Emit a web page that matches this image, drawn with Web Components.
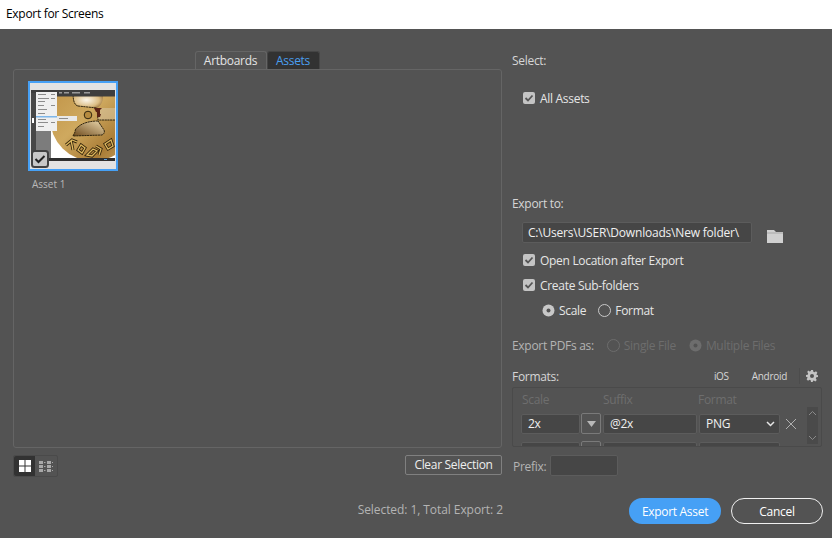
<!DOCTYPE html>
<html>
<head>
<meta charset="utf-8">
<title>Export for Screens</title>
<style>
  html, body { margin: 0; height: 100%; overflow: hidden; }
  body { background: #535353; font: 12px "Open Sans", sans-serif; letter-spacing: -0.3px; color: #d6d6d6; }
  .main { display: flex; padding: 22px 10px 0 13px; gap: 10px; }
  .left { width: 489px; display: flex; flex-direction: column; }
  .right { width: 310px; display: flex; flex-direction: column; }
  .footer { display: flex; align-items: center; padding: 21px 9px 0 0; }
  .status { width: 503px; text-align: right; color: #b4b4b4; letter-spacing: -0.07px; margin-bottom: 3px; }
  .actions { display: flex; gap: 10px; margin-left: auto; }
  .row { display: flex; align-items: center; height: 20px; }
  .toolbar { display: flex; justify-content: space-between; align-items: flex-start; margin-top: 7px; }
  .sect { height: 16px; line-height: 16px; }
  .dim { color: #7a7a7a; }
</style>
</head>
<body>
<export-titlebar>Export for Screens</export-titlebar>
<div class="main">
  <div class="left">
    <export-tabs></export-tabs>
    <asset-panel><asset-thumb>Asset 1</asset-thumb></asset-panel>
    <div class="toolbar">
      <view-toggle></view-toggle>
      <export-button kind="small">Clear Selection</export-button>
    </div>
  </div>
  <div class="right">
    <div class="sect" style="margin-top:2px">Select:</div>
    <div class="row" style="margin:19px 0 0 11px"><export-check checked>All Assets</export-check></div>
    <div class="sect" style="margin-top:88px">Export to:</div>
    <div class="row" style="margin:10px 0 0 10px;height:21px">
      <text-field style="width:230px;letter-spacing:-0.2px">C:\Users\USER\Downloads\New folder\</text-field>
      <svg width="16" height="14" viewBox="0 0 16 14" style="margin:6px 0 0 15px">
        <path d="M0 1h7l2 2h7v11H0z" fill="#d0d0d0"/><path d="M0 4h16" stroke="#8f8f8f" stroke-width=".6"/>
      </svg>
    </div>
    <div class="row" style="margin:7px 0 0 11px"><export-check checked>Open Location after Export</export-check></div>
    <div class="row" style="margin:5px 0 0 11px"><export-check checked>Create Sub-folders</export-check></div>
    <div class="row" style="margin:5px 0 0 30px;gap:12px">
      <export-radio checked>Scale</export-radio><export-radio>Format</export-radio>
    </div>
    <div class="row dim" style="margin-top:15px;height:20px">
      <span style="color:#b4b4b4;margin-right:13px">Export PDFs as:</span>
      <export-radio disabled>Single File</export-radio>
      <export-radio disabled checked style="margin-left:13px">Multiple Files</export-radio>
    </div>
    <div class="row" style="margin-top:11px;height:20px">
      <span>Formats:</span>
      <span style="margin-left:auto;font-size:10px">iOS</span>
      <span style="margin-left:23px;font-size:10px">Android</span>
      <span style="width:1px;height:16px;background:#4c4c4c;margin:0 6px 0 12px"></span>
      <svg width="12" height="12" viewBox="0 0 24 24" style="margin-right:4px">
        <path fill="#c4c4c4" fill-rule="evenodd" d="M10 0h4l.7 3.4 2.3 1 3-1.9 2.8 2.8-1.900 3 1 2.300L24 10v4l-3.400.7-1 2.300 1.900 3-2.800 2.800-3-1.900-2.300 1L14 24h-4l-.7-3.400-2.300-1-3 1.900-2.800-2.800 1.900-3-1-2.300L0 14v-4l3.400-.7 1-2.300-1.900-3L4.300 1.200l3 1.900 2.300-1zM12 8a4 4 0 100 8 4 4 0 000-8z"/>
      </svg>
    </div>
    <format-table></format-table>
    <div class="row" style="margin-top:7px;height:22px;gap:4px;color:#b4b4b4">
      <span style="margin-left:1px;padding-top:2px">Prefix:</span><text-field style="width:68px"></text-field>
    </div>
  </div>
</div>
<div class="footer">
  <div class="status">Selected: 1, Total Export: 2</div>
  <div class="actions">
    <export-button kind="primary">Export Asset</export-button>
    <export-button kind="outline">Cancel</export-button>
  </div>
</div>

<script>
  /**
   * Small helper, every element below has a shadow root filled from a string.
   */
  class ShadowEl extends HTMLElement {
    constructor () {
      super()
      this.attachShadow({ mode: 'open' })
    }

    connectedCallback () {
      this.shadowRoot.innerHTML = this.markup()
    }
  }

  customElements.define('export-titlebar', class extends ShadowEl {
    markup () {
      return `<style>
        :host { display: flex; align-items: center; height: 29px; padding-left: 6px; background: #fff; color: #000; padding-bottom: 2px; box-sizing: border-box; }
      </style><slot></slot>`
    }
  })

  customElements.define('export-tabs', class extends ShadowEl {
    markup () {
      return `<style>
        :host { display: flex; justify-content: center; height: 18px; padding-right: 1px; }
        div { height: 18px; box-sizing: border-box; border: 1px solid #656565; border-bottom: 0; border-radius: 3px 3px 0 0; line-height: 17px; text-align: center; }
        .a { width: 72px; color: #e4e4e4; background: #535353; }
        .b { width: 53px; color: #4a9ff0; background: #323232; border-color: #454545; }
      </style><div class="a">Artboards</div><div class="b">Assets</div>`
    }
  })

  customElements.define('asset-panel', class extends ShadowEl {
    markup () {
      return `<style>
        :host { display: block; height: 379px; box-sizing: border-box; border: 1px solid #656565; border-radius: 3px; padding: 11px 14px; }
      </style><slot></slot>`
    }
  })

  customElements.define('asset-thumb', class extends ShadowEl {
    markup () {
      return `<style>
        :host { display: block; width: 90px; color: #b8b8b8; font-size: 10px; letter-spacing: 0; }
        svg { display: block; }
        div { margin: 6px 0 0 4px; line-height: 14px; }
      </style>
      <svg width="90" height="90" viewBox="28 81 90 90">
        <defs>
          <linearGradient id="gold" x1="0" y1="0" x2="1" y2="1">
            <stop offset="0" stop-color="#bd8f42"/><stop offset=".45" stop-color="#cfa95f"/>
            <stop offset=".75" stop-color="#a97c36"/><stop offset="1" stop-color="#cba868"/>
          </linearGradient>
          <radialGradient id="blob" cx=".45" cy=".5" r=".7">
            <stop offset="0" stop-color="#fbf6ea"/><stop offset=".6" stop-color="#dcbd84"/><stop offset="1" stop-color="#7a5220"/>
          </radialGradient>
          <linearGradient id="low" x1="0" y1="1" x2="1" y2="0">
            <stop offset="0" stop-color="#6e4a1c"/><stop offset="1" stop-color="#ecd9ae"/>
          </linearGradient>
          <clipPath id="img"><rect x="31" y="90" width="84" height="71"/></clipPath>
        </defs>
        <rect x="28" y="81" width="90" height="90" fill="#46a0f5"/>
        <rect x="30" y="83" width="86" height="86" fill="#e2e2e2"/>
        <g clip-path="url(#img)">
          <rect x="31" y="90" width="84" height="71" fill="#fff"/>
          <circle cx="93" cy="118" r="43" fill="url(#gold)"/>
          <path d="M73 92h29c2 6 1 12-5 16l-19-2c-3-1-5-6-5-14z" fill="url(#blob)"/>
          <path d="M78 106l19 2 1 12h18v-12H97z" fill="#d8c8a6" opacity=".55"/>
          <path d="M78 106l19 2 1 12h18M73 92c0 8 1 13 5 14" fill="none" stroke="#201808" stroke-width=".9" stroke-dasharray="2.200 .5"/>
          <path d="M98 121c-8 0-16 2-20 6-2 1-3 3-3 5l-2 4 29-1c2-1 3-3 2-5z" fill="url(#low)" stroke="#201808" stroke-width=".9" stroke-dasharray="2.200 .5"/>
          <circle cx="88" cy="115" r="3.800" fill="#b68b3f" stroke="#201808" stroke-width=".9"/>
          <path d="M94 108h8l-2 2v4h1l-1 3h-3v-5h-1z" fill="#5a2216"/>
          <g fill="none" stroke="#33240c" stroke-width="3"><path d="M66 145l6-5 5 2m-6-2l2 10"/><path d="M78 150l3-5 4 3-3 5z"/><path d="M87 155l6-6 4 2-5 5zM96 146l5 3-2 6"/><path d="M105 144l6-4 2 6-5 3z"/></g>
          <g fill="none" stroke="#dfb95f" stroke-width="1.300"><path d="M66 145l6-5 5 2m-6-2l2 10"/><path d="M78 150l3-5 4 3-3 5z"/><path d="M87 155l6-6 4 2-5 5zM96 146l5 3-2 6"/><path d="M105 144l6-4 2 6-5 3z"/></g>
          <rect x="31" y="90" width="84" height="6.500" fill="#3e3e3e"/>
          <g fill="#9a9a9a"><rect x="59" y="92" width="3" height="1.500"/><rect x="64" y="92" width="5" height="1.500"/><rect x="72" y="92" width="8" height="1.500"/><rect x="84" y="92" width="6" height="1.500"/></g>
          <rect x="31" y="93" width="5" height="65" fill="#474747"/>
          <rect x="36" y="93" width="15" height="65" fill="#7c7c7c"/>
          <path d="M51 125q-1 20 9 33H51z" fill="#fff"/>
          <rect x="32" y="118" width="2" height="5" fill="#fff"/>
          <rect x="36" y="92" width="21" height="39" fill="#efefef"/>
          <g fill="#8c8c8c"><rect x="38" y="94" width="8" height="1"/><rect x="51" y="94" width="4" height="1"/><rect x="38" y="98" width="11" height="1"/><rect x="51" y="98" width="4" height="1"/><rect x="38" y="101" width="7" height="1"/><rect x="38" y="105" width="6" height="1"/><rect x="51" y="105" width="4" height="1"/><rect x="38" y="109" width="9" height="1"/><rect x="38" y="113" width="7" height="1"/><rect x="38" y="119" width="8" height="1"/><rect x="38" y="122" width="10" height="1"/><rect x="51" y="122" width="4" height="1"/><rect x="38" y="126" width="6" height="1"/></g>
          <rect x="36" y="116" width="21" height="1.500" fill="#7db6ea"/>
          <rect x="57" y="116" width="20" height="5" fill="#e8e8e8"/>
          <rect x="59" y="118" width="9" height="1" fill="#8c8c8c"/>
          <rect x="31" y="158" width="84" height="3" fill="#2e2e2e"/>
          <rect x="104" y="159" width="3" height="1" fill="#5a9ad8"/>
        </g>
        <rect x="32" y="151" width="16" height="16" rx="2.500" fill="#c8c8c8" stroke="#424242" stroke-width="2"/>
        <path d="M35.500 159l3 3 6-6" fill="none" stroke="#222" stroke-width="2"/>
      </svg>
      <div><slot></slot></div>`
    }
  })

  customElements.define('view-toggle', class extends ShadowEl {
    markup () {
      return `<style>
        :host { display: flex; width: 45px; height: 22px; box-sizing: border-box; border: 1px solid #4a4a4a; border-radius: 2px; }
        div { display: flex; align-items: center; justify-content: center; }
        .on { width: 21px; background: #323232; border-radius: 2px 0 0 2px; }
        .off { flex: 1; }
        svg { display: block; }
      </style>
      <div class="on"><svg width="12" height="12"><path fill="#fff" d="M0 0h5.500v5.500H0zM6.500 0H12v5.500H6.500zM0 6.500h5.500V12H0zM6.500 6.500H12V12H6.500z"/></svg></div>
      <div class="off"><svg width="14" height="11"><path fill="#a8a8a8" d="M0 0h4v3H0zM8 0h4v3H8zM5 1h1.500v1H5zM13 1h1v1h-1zM0 4h4v3H0zM8 4h4v3H8zM5 5h1.500v1H5zM13 5h1v1h-1zM0 8h4v3H0zM8 8h4v3H8zM5 9h1.500v1H5zM13 9h1v1h-1z"/></svg></div>`
    }
  })

  customElements.define('export-button', class extends ShadowEl {
    markup () {
      return `<style>
        :host { display: block; box-sizing: border-box; text-align: center; color: #fff; }
        :host([kind=small]) { width: 97px; height: 20px; line-height: 18px; border: 1px solid #808080; border-radius: 2px; color: #eee; }
        :host([kind=primary]) { width: 92px; height: 26px; line-height: 27px; border-radius: 13px; background: #46a0f5; }
        :host([kind=outline]) { width: 92px; height: 26px; line-height: 25px; border-radius: 13px; border: 1px solid #f0f0f0; }
      </style><slot></slot>`
    }
  })

  customElements.define('export-check', class extends ShadowEl {
    markup () {
      return `<style>
        :host { display: inline-flex; align-items: center; gap: 5px; color: #e6e6e6; }
        i { width: 12px; height: 12px; border-radius: 2px; background: #c4c4c4; display: block; }
        svg { display: block; }
      </style><i><svg width="12" height="12"><path d="M2.500 6l2.500 2.500 4.500-5" fill="none" stroke="#555" stroke-width="1.800"/></svg></i><span><slot></slot></span>`
    }
  })

  customElements.define('export-radio', class extends ShadowEl {
    markup () {
      const on = this.hasAttribute('checked')
      const off = this.hasAttribute('disabled')
      const col = off ? '#6d6d6d' : '#c8c8c8'
      const dot = on
        ? `<circle cx="6.500" cy="6.500" r="6" fill="${col}"/><circle cx="6.500" cy="6.500" r="2" fill="#535353"/>`
        : `<circle cx="6.500" cy="6.500" r="6" fill="none" stroke="${col}"/>`
      return `<style>
        :host { display: inline-flex; align-items: center; gap: 4px; color: ${off ? '#6d6d6d' : '#e6e6e6'}; }
        svg { display: block; }
      </style><svg width="13" height="13">${dot}</svg><span><slot></slot></span>`
    }
  })

  customElements.define('text-field', class extends ShadowEl {
    markup () {
      return `<style>
        :host { display: block; box-sizing: border-box; height: 21px; line-height: 20px; padding-left: 5px; background: #464646; border: 1px solid #5c5c5c; border-radius: 2px; color: #f0f0f0; white-space: nowrap; overflow: hidden; }
      </style><slot></slot>`
    }
  })

  customElements.define('format-table', class extends ShadowEl {
    markup () {
      const row = (top, scale, suffix, fmt) => `
        <div class="row" style="margin-top:${top}px">
          <div class="f" style="width:59px">${scale}</div>
          <div class="dd"><svg width="9" height="6"><path d="M0 0h9L4.500 6z" fill="#b8b8b8"/></svg></div>
          <div class="f" style="width:94px;margin-left:2px">${suffix}</div>
          <div class="f sel" style="width:81px;margin-left:2px">${fmt}
            <svg width="9" height="6"><path d="M1 1l3.500 3.500L8 1" fill="none" stroke="#e6e6e6" stroke-width="1.500"/></svg>
          </div>
          <svg class="x" width="12" height="12"><path d="M1 1l10 10M11 1L1 11" stroke="#b0b0b0"/></svg>
        </div>`
      return `<style>
        :host { display: block; position: relative; height: 60px; box-sizing: border-box; margin-top: 1px; border: 1px solid #4a4a4a; border-radius: 2px; overflow: hidden; padding: 0 0 0 8px; }
        .head { display: flex; height: 22px; margin-bottom: 3px; align-items: center; color: #6e6e6e; }
        .head span { display: block; }
        .row { display: flex; align-items: center; height: 21px; }
        .f { box-sizing: border-box; height: 20px; line-height: 18px; padding-left: 6px; background: #464646; border: 1px solid #5c5c5c; border-radius: 2px; color: #f0f0f0; flex: none; }
        .dd { box-sizing: border-box; width: 20px; height: 21px; margin-left: 1px; border: 1px solid #7a7a7a; border-radius: 2px; display: flex; align-items: center; justify-content: center; flex: none; }
        .sel { display: flex; justify-content: space-between; align-items: center; padding-right: 4px; }
        .x { margin-left: 5px; flex: none; }
        .bar { position: absolute; left: 294px; top: 19px; width: 11px; height: 37px; background: #4a4a4a; }
        .bar svg { display: block; position: absolute; left: 1px; }
      </style>
      <div class="head">
        <span style="width:82px;padding-left:1px;box-sizing:border-box">Scale</span>
        <span style="width:95px">Suffix</span><span>Format</span>
      </div>
      ${row(0, '2x', '@2x', 'PNG')}${row(7, '', '', '')}
      <div class="bar">
        <svg width="9" height="6" style="top:3px"><path d="M1 5l3.500-3.500L8 5" fill="none" stroke="#8a8a8a"/></svg>
        <svg width="9" height="6" style="bottom:3px"><path d="M1 1l3.500 3.500L8 1" fill="none" stroke="#8a8a8a"/></svg>
      </div>`
    }
  })
</script>
</body>
</html>
